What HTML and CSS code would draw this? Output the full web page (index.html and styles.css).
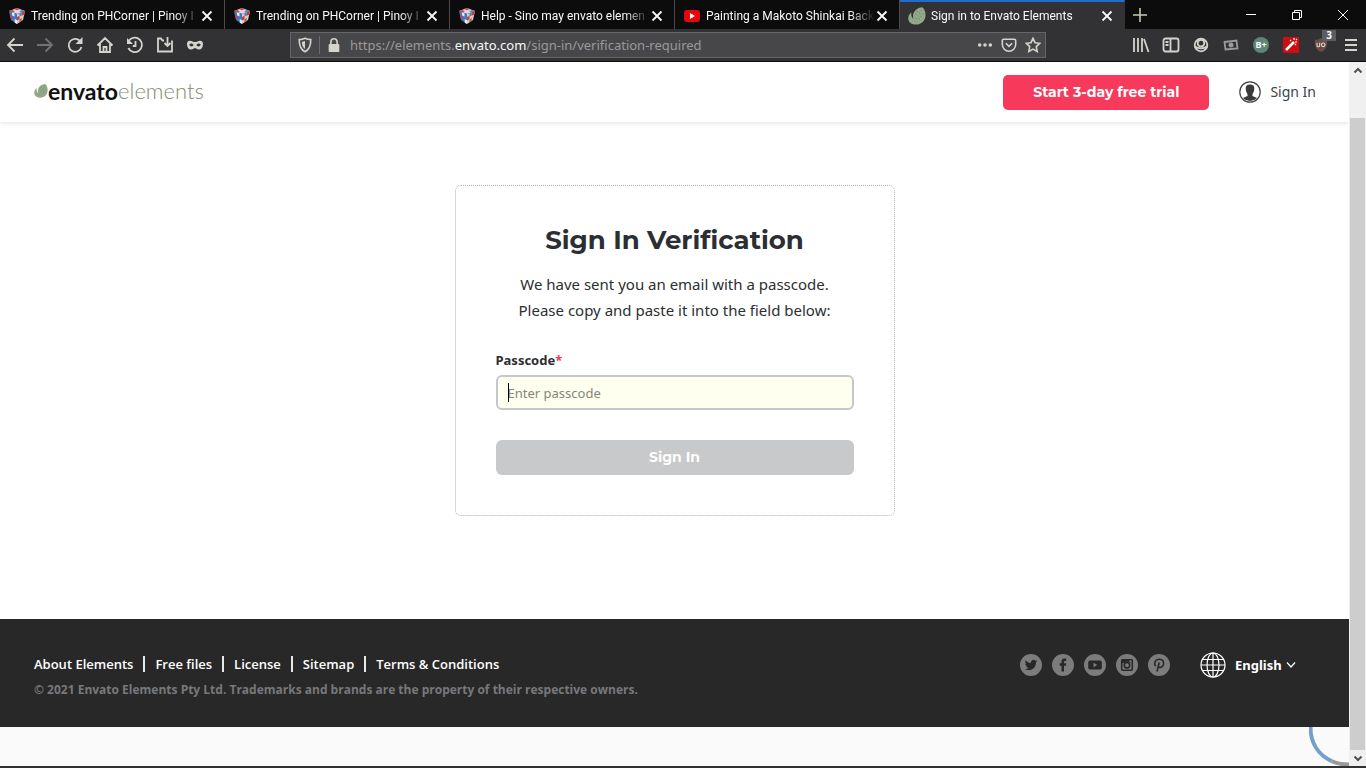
FILE: index.html
```html
<!DOCTYPE html>
<html lang="en">
<head>
<meta charset="utf-8">
<meta name="viewport" content="width=device-width, initial-scale=1">
<title>Sign in to Envato Elements</title>
<link rel="stylesheet" href="styles.css">
</head>
<body>
<svg class="sprite" aria-hidden="true">
  <symbol id="cube" viewBox="0 0 18 18">
    <path d="M9 1 17 4 9 7 1 4z" fill="#dcd8e4"/><path d="M1 4 9 7v10L3 13z" fill="#3f7ac0"/><path d="M17 4 9 7v10l6-4z" fill="#d9c9c6"/>
    <path d="M6 2l3-1 3 1-3 1.200zM1 4l3-1 3 1.200L4.500 5.300z" fill="#d33b3d"/><path d="M11 4.200 14 3l3 1-3 1.200z" fill="#4a83c4"/><path d="M3.800 5.200 6.500 6.200v3.300L4.200 8.500zM6.700 12 9 13.200V17l-2.200-1.300z" fill="#eceaf2"/><path d="M1.800 8l2.400 1 .3 3L2.500 11z" fill="#d33b3d"/><path d="M13.800 5.200 17 4l-.6 3.500-2.800 1.200zM9 10l2.500-1.200v3.400L9 13.500z" fill="#c93a3a"/><path d="M11.500 12.200 13.700 11v3L11.300 15.500z" fill="#b65a4c"/><path d="M11.500 6l2.200-.8v3.400l-2.200 1z" fill="#4a83c4"/>
  </symbol>
  <symbol id="leaf" viewBox="1 1 22.500 22.500">
    <path d="M19 1.200C12.500 1.500 7 6.500 7.200 12.500c0 1.600.3 2.800.8 3.800C5.500 14 4.600 11 5.200 7.500 2.500 9.500 1 13 1.400 16.200 2 20.500 6.500 23.300 11.500 23c6.500-.3 10.800-4.800 11.400-10.800C23.300 8.200 22 3.500 19 1.200z" fill="#93a888"/><path d="M18 5 9 19M20 9l-7 10M13 6l-3 6" stroke="#6d8068" stroke-width="1.300" stroke-dasharray="1.300 2.600" fill="none"/>
  </symbol>
  <symbol id="x" viewBox="0 0 12 12"><path d="M1.500 1.500l9 9m0-9l-9 9" stroke="currentColor" stroke-width="1.800" fill="none"/></symbol>
</svg>

<header class="chrome">
  <div class="tabstrip">
    <div class="tab"><svg class="favicon"><use href="#cube"/></svg><button class="tab-title" type="button">Trending on PHCorner | Pinoy I</button><button class="tab-close" type="button" aria-label="Close tab"><svg><use href="#x"/></svg></button></div>
    <div class="tab"><svg class="favicon"><use href="#cube"/></svg><button class="tab-title" type="button">Trending on PHCorner | Pinoy I</button><button class="tab-close" type="button" aria-label="Close tab"><svg><use href="#x"/></svg></button></div>
    <div class="tab"><svg class="favicon"><use href="#cube"/></svg><button class="tab-title" type="button">Help - Sino may envato elemen</button><button class="tab-close" type="button" aria-label="Close tab"><svg><use href="#x"/></svg></button></div>
    <div class="tab"><svg class="favicon" viewBox="0 0 18 18"><rect x="1" y="3" width="16" height="12" rx="3" fill="#e4060a"/><path d="M7 6v6l5-3z" fill="#fff"/></svg><button class="tab-title" type="button">Painting a Makoto Shinkai Back</button><button class="tab-close" type="button" aria-label="Close tab"><svg><use href="#x"/></svg></button></div>
    <div class="tab tab-active"><svg class="favicon"><use href="#leaf"/></svg><button class="tab-title" type="button">Sign in to Envato Elements</button><button class="tab-close" type="button" aria-label="Close tab"><svg><use href="#x"/></svg></button></div>
    <button class="new-tab" type="button" aria-label="New tab"><svg viewBox="0 0 14 14"><path d="M7 0v14M0 7h14" stroke="#c5c8b8" stroke-width="1.600"/></svg></button>
    <div class="window-controls">
      <button type="button" aria-label="Minimize"><svg viewBox="0 0 12 12"><path d="M1 5.500h10" stroke="#fff"/></svg></button>
      <button type="button" aria-label="Restore"><svg viewBox="0 0 12 12" fill="none" stroke="#fff"><path d="M1.500 3.500h7v7h-7zM3.500 3.500v-2h7v7h-2"/></svg></button>
      <button type="button" aria-label="Close"><svg viewBox="0 0 12 12"><path d="M1 1l10 10M11 1L1 11" stroke="#fff"/></svg></button>
    </div>
  </div>
  <div class="toolbar">
    <div class="tools">
      <button type="button" aria-label="Back"><svg viewBox="0 0 18 18"><path d="M17 9H2M8.500 2.500 2 9l6.500 6.500"/></svg></button>
      <button class="dim" type="button" aria-label="Forward"><svg viewBox="0 0 18 18"><path d="M1 9h15M9.500 2.500 16 9l-6.500 6.500"/></svg></button>
      <button type="button" aria-label="Reload"><svg viewBox="0 0 18 18"><path d="M14.500 5.500A6.500 6.500 0 1 0 15.500 11"/><path class="solid" d="M16.500 1v7h-7z"/></svg></button>
      <button type="button" aria-label="Home"><svg viewBox="0 0 18 18"><path d="M1.500 9.500 9 2l7.500 7.500M4 8v8h10V8M7.500 16v-5h3v5"/></svg></button>
      <button type="button" aria-label="History"><svg viewBox="0 0 18 18"><path d="M3 4.500A7.200 7.200 0 1 1 2.300 12M9.500 5v5H6.800"/><path class="solid" d="M1 2v6h6z"/></svg></button>
      <button type="button" aria-label="Save"><svg viewBox="0 0 18 18"><path d="M8 4.500H6.500L5 2.500H2v13h14v-11M11.500 1v8.500M8.500 7l3 3 3-3"/></svg></button>
      <button type="button" aria-label="Private browsing"><svg viewBox="0 0 18 18"><path class="solid" fill-rule="evenodd" d="M1 8c0-3 2-3.500 4-3 1.600.4 2.400 1 4 1s2.400-.6 4-1c2-.5 4 0 4 3 0 3.500-1.500 5.500-4 5.500-2.200 0-3-1.500-4-1.500s-1.800 1.500-4 1.500C2.500 13.500 1 11.500 1 8zm2.300.5c.6 2.500 3.400 2.500 4.400.6-1-2-3.400-2.200-4.400-.6zm7 .6c1 1.900 3.800 1.900 4.400-.6-1-1.600-3.400-1.400-4.400.6z"/></svg></button>
    </div>
    <div class="urlbar">
      <svg viewBox="0 0 18 18"><path d="M9 1.500c2 1 4 1.500 6.500 1.500 0 6-1.500 11-6.500 13.500C4 14 2.500 9 2.500 3 5 3 7 2.500 9 1.500z"/><path class="solid" d="M9 4.500v9C6.500 11.500 5.500 8.500 5.500 5.500z"/></svg>
      <span class="divider"></span>
      <svg viewBox="0 0 18 18"><path d="M5.500 9V5.500a3.500 3.500 0 0 1 7 0V9"/><rect class="solid" x="3" y="8" width="12" height="9" rx="1"/></svg>
      <div class="url" role="textbox" aria-label="Address">https://elements.<b>envato.com</b>/sign-in/verification-required</div>
      <button type="button" aria-label="Page actions"><svg viewBox="0 0 18 18"><g class="solid"><circle cx="3" cy="9" r="2"/><circle cx="9" cy="9" r="2"/><circle cx="15" cy="9" r="2"/></g></svg></button>
      <button type="button" aria-label="Pocket"><svg viewBox="0 0 18 18"><path d="M3 2.500h12a1.500 1.500 0 0 1 1.500 1.500v4.500a7.500 7.500 0 0 1-15 0V4A1.500 1.500 0 0 1 3 2.500zM5.500 7 9 10.500 12.500 7"/></svg></button>
      <button type="button" aria-label="Bookmark"><svg viewBox="0 0 18 18"><path d="M9 1.500l2.300 4.900 5.200.7-3.800 3.700 1 5.400L9 13.600l-4.700 2.600 1-5.400L1.500 7.100l5.200-.7z"/></svg></button>
    </div>
    <div class="tools">
      <button type="button" aria-label="Library"><svg viewBox="0 0 18 18"><path d="M2 2v14M6 2v14M10 2v14M12 3l4.500 13"/></svg></button>
      <button type="button" aria-label="Sidebars"><svg viewBox="0 0 18 18"><rect x="1.500" y="2.500" width="15" height="13" rx="2"/><path d="M8.500 2.500v13M3.500 6h3M3.500 9h3"/></svg></button>
      <button type="button" aria-label="Account"><svg viewBox="0 0 18 18"><circle cx="9" cy="9" r="6.300"/><circle cx="9" cy="7.200" r="3.300"/><path d="M3 10.500c3 2.500 9 2.500 12 0"/></svg></button>
      <button class="dim-mid" type="button" aria-label="Capture"><svg viewBox="0 0 18 18"><path d="M2.500 6l12-1.500 1 8-12 1z"/><circle class="solid" cx="9" cy="9" r="2.500"/></svg></button>
      <button type="button" aria-label="B plus"><span class="ext-b">B+</span></button>
      <button type="button" aria-label="Magic wand"><svg viewBox="0 0 18 18"><path d="M1 1h16v16H1z" fill="#cf0d10" stroke="none"/><path d="M4 14l8-8" stroke="#fff" stroke-width="2.500"/><path d="M12 2v2M15 6h-2M8 4l1 1M14 9l-1-1M15 3l-1 1" stroke="#fff" stroke-width="1.200"/></svg></button>
      <button class="ublock" type="button" aria-label="Blocker, 3 blocked"><svg viewBox="0 0 18 18"><path d="M9 1c2 1.500 4 2 7 2 .3 7-1 11-7 14C3 14 1.700 10 2 3c3 0 5-.5 7-2z" fill="#6d4a43" stroke="none"/><path d="M4.500 6.500v3q0 1.500 1.500 1.500t1.500-1.500v-3" stroke-width="1.300"/><circle cx="11.500" cy="8.800" r="2" stroke-width="1.300"/></svg><span class="badge">3</span></button>
      <button type="button" aria-label="Menu"><svg viewBox="0 0 18 18"><path d="M3 4h12M3 9h12M3 14h12"/></svg></button>
    </div>
  </div>
</header>

<div class="viewport">
  <div class="page">
    <header class="site-header">
      <a class="logo" href="#"><svg class="logo-leaf"><use href="#leaf"/></svg><span class="logo-envato">envato</span><span class="logo-elements">elements</span></a>
      <a class="trial" href="#">Start 3-day free trial</a>
      <a class="account" href="#"><svg viewBox="0 0 22 22"><circle cx="11" cy="11" r="10.200" fill="#fff" stroke="#3e4043" stroke-width="1.200"/><path d="M11 3.500c3.500 0 4.600 2.200 4.200 5-.2 2.500-1 3.500-1.700 4.500v2l4.600 2a10.200 10.200 0 0 1-14.200 0l4.600-2v-2C7.800 12 7 11 6.800 8.500 6.400 5.700 7.500 3.500 11 3.500z" fill="#3a3a3b"/></svg>Sign In</a>
    </header>

    <main class="content">
      <form class="card">
        <h1>Sign In Verification</h1>
        <p>We have sent you an email with a passcode.<br>Please copy and paste it into the field below:</p>
        <label for="passcode">Passcode<span class="required">*</span></label>
        <div class="field"><input id="passcode" type="text" placeholder="Enter passcode"><span class="caret"></span></div>
        <button class="submit" type="button">Sign In</button>
      </form>
    </main>

    <footer class="site-footer">
      <div class="legal">
        <nav class="links"><a href="#">About Elements</a><a href="#">Free files</a><a href="#">License</a><a href="#">Sitemap</a><a href="#">Terms &amp; Conditions</a></nav>
        <div class="copyright">© 2021 Envato Elements Pty Ltd. Trademarks and brands are the property of their respective owners.</div>
      </div>
      <nav class="social">
        <a href="#" aria-label="Twitter"><svg viewBox="-9 -9 42 42"><path d="M23.950 4.570a10 10 0 0 1-2.820.770 4.960 4.960 0 0 0 2.160-2.720 9.900 9.900 0 0 1-3.120 1.190 4.920 4.920 0 0 0-8.380 4.480C7.690 8.090 4.070 6.130 1.640 3.160a4.920 4.920 0 0 0 1.520 6.570 4.900 4.900 0 0 1-2.230-.610v.060c0 2.380 1.700 4.370 3.950 4.830a5 5 0 0 1-2.210.080 4.930 4.930 0 0 0 4.600 3.420A9.870 9.870 0 0 1 0 19.540a13.990 13.990 0 0 0 7.550 2.210c9.050 0 14-7.500 14-13.980 0-.210 0-.420-.020-.630a9.940 9.940 0 0 0 2.420-2.570z"/></svg></a>
        <a href="#" aria-label="Facebook"><svg viewBox="0 0 22 22"><path d="M9.500 17.500V11.800H7.700V9.300h1.800V7.700c0-2 1-3.200 3-3.200h1.700v2.400h-1.100c-.8 0-1.100.3-1.100 1.100v1.300h2.200l-.3 2.500H12v5.700z"/></svg></a>
        <a href="#" aria-label="YouTube"><svg viewBox="0 0 22 22"><path fill-rule="evenodd" d="M6 6.500h10q1.800 0 1.800 1.800v5.400q0 1.800-1.800 1.800H6q-1.800 0-1.800-1.800V8.300Q4.200 6.500 6 6.500zM9.500 8.800v4.400l3.800-2.200z"/></svg></a>
        <a href="#" aria-label="Instagram"><svg viewBox="0 0 22 22"><rect class="line" x="5.700" y="5.700" width="10.600" height="10.600" rx="1"/><path d="M5.500 5.500h11V9h-3a3.500 3.500 0 0 0-5 0h-3z"/><path d="M13.400 6.500v2h2.200v-2z" fill="#7c7c7c"/><circle class="line" cx="11" cy="11.200" r="2.700"/></svg></a>
        <a href="#" aria-label="Pinterest"><svg viewBox="0 0 22 22"><path class="line" d="M7.600 12.200C5.400 8.500 7.500 5.200 11.200 5.200c3.400 0 5.200 2.500 4.200 5.500-.8 2.500-3.700 3.500-5 1.800M11.200 8.500 9 17.500"/></svg></a>
      </nav>
      <div class="language">
        <svg class="globe" viewBox="0 0 26 26"><circle cx="13" cy="13" r="12"/><ellipse cx="13" cy="13" rx="6" ry="12"/><path d="M13 1v24M1 13h24M3 7.500h20M3 18.500h20"/></svg>
        <select aria-label="Language"><option>English</option></select>
        <svg class="chevron" viewBox="0 0 10 10"><path d="M1 2.500l4 4.500 4-4.500"/></svg>
      </div>
    </footer>

    <div class="page-end"><svg viewBox="0 0 40 39"><path d="M1.500 0c0 16 8 28 21 34" stroke="#729fd0"/><path d="M22.500 34c6 3 11 3.500 17.500 3.500" stroke="#9a9a96"/></svg></div>
  </div>
  <div class="scrollbar" aria-hidden="true">
    <svg viewBox="0 0 16 16"><path d="M4.500 10.500 8 7l3.500 3.500"/></svg>
    <div class="track"><div class="thumb"></div></div>
    <svg viewBox="0 0 16 16"><path d="M4.500 6.500 8 10l3.500-3.500"/></svg>
  </div>
</div>
</body>
</html>
```
FILE: styles.css
```css
* { box-sizing: border-box; }
body {
  margin: 0;
  min-height: 100vh;
  display: flex;
  flex-direction: column;
  background: #fff;
  border-bottom: 2px solid #303234;
  font-family: "Segoe UI", "Noto Sans", sans-serif;
  color: #2b2f33;
}
button, input, select { font: inherit; color: inherit; }
button { border: 0; padding: 0; background: none; }
a { color: inherit; text-decoration: none; }
svg { display: block; flex: none; }
.sprite { position: absolute; width: 0; height: 0; }

/* Browser chrome */
.chrome { color: #f9f9fa; }
.tabstrip { display: flex; height: 29px; background: #0c0c0d; }
.tab {
  flex: 0 1 225px;
  min-width: 0;
  display: flex;
  align-items: center;
  padding: 2px 10px 0 8px;
  border-right: 1px solid #4a4a4f;
}
.tab-active { border-right-color: #323234; border-top: 2px solid #1c6fd0; padding-top: 0; background: #323234; }
.favicon { width: 18px; height: 18px; margin-right: 5px; }
.tab-title {
  flex: 1;
  min-width: 0;
  overflow: hidden;
  white-space: nowrap;
  text-align: left;
  font-family: "Segoe UI", Roboto, sans-serif;
  font-size: 12px;
  line-height: 20px;
  -webkit-mask-image: linear-gradient(to right, #000 85%, transparent);
  mask-image: linear-gradient(to right, #000 85%, transparent);
}
.tab-close { width: 14px; display: grid; place-items: center; }
.tab-close svg { width: 12px; height: 12px; }
.new-tab { width: 30px; display: grid; place-items: center; }
.new-tab svg { width: 14px; height: 14px; }
.window-controls { display: flex; margin-left: auto; }
.window-controls button { width: 46px; display: grid; place-items: center; }
.window-controls svg { width: 12px; height: 12px; }

.toolbar {
  display: flex;
  align-items: center;
  gap: 80px;
  height: 33px;
  background: #323234;
  border-bottom: 1px solid #0c0c0d;
}
.toolbar svg { width: 18px; height: 18px; fill: none; stroke: #d3d4cd; stroke-width: 1.800; }
.toolbar .solid { fill: #d3d4cd; stroke: none; }
.tools { display: flex; }
.tools button { width: 30px; height: 30px; display: grid; place-items: center; position: relative; }
.dim { opacity: .4; }
.dim-mid { opacity: .65; }
.ext-b {
  width: 16px;
  border-radius: 50%;
  background: #5c8678;
  font-size: 9px;
  line-height: 16px;
  font-weight: 700;
  text-align: center;
}
.toolbar .ublock svg { width: 16px; height: 16px; }
.badge {
  position: absolute;
  top: 0;
  right: 0;
  width: 14px;
  background: #5c5c61;
  font-size: 10px;
  line-height: 11px;
  font-weight: 700;
  text-align: center;
}
.urlbar {
  flex: 1;
  min-width: 0;
  display: flex;
  align-items: center;
  height: 26px;
  padding: 0 0 0 6px;
  background: #474749;
  border: 1px solid #66666a;
}
.urlbar button { width: 24px; display: grid; place-items: center; }
.urlbar svg { width: 16px; height: 16px; }
.divider { width: 1px; height: 18px; margin: 0 6px; background: #6b6b6e; }
.url { flex: 1; min-width: 0; overflow: hidden; white-space: nowrap; padding-left: 8px; font-size: 13px; line-height: 22px; color: #99999c; }
.url b { font-weight: 400; color: #f9f9fa; }

/* Page and its scrollbar */
.viewport { flex: 1; display: flex; }
.page { flex: 1; min-width: 0; display: flex; flex-direction: column; }
.scrollbar { width: 17px; display: flex; flex-direction: column; padding-left: 1px; background: #f0f0f0; }
.scrollbar svg { width: 16px; height: 16px; fill: none; stroke: #505050; stroke-width: 2; }
.track { flex: 1; display: flex; flex-direction: column; justify-content: flex-end; }
.thumb { height: 94%; margin-right: 1px; background: #cdcdcd; }

.site-header {
  display: flex;
  align-items: center;
  height: 60px;
  padding: 0 33px 0 34px;
  box-shadow: 0 1px 5px rgba(0, 0, 0, .12);
}
.logo { display: flex; align-items: center; margin-right: auto; font-family: Lato, sans-serif; font-size: 22px; line-height: 26px; padding-bottom: 2px; }
.logo-leaf { width: 14px; height: 16px; }
.logo-envato { font-size: 23px; font-weight: 700; color: #111; }
.logo-elements { font-weight: 300; color: #7f8c70; }
.trial {
  padding: 0 30px;
  border-radius: 5px;
  background: #f7395b;
  color: #fff;
  font: 700 14px/35px Montserrat, Inter, sans-serif;
}
.account { display: flex; align-items: center; gap: 9px; margin-left: 30px; font-size: 14px; line-height: 24px; color: #3a444c; }
.account svg { width: 22px; height: 22px; }

.content { flex: 1; display: flex; justify-content: center; align-items: flex-start; padding: 63px 20px 103px; }
.card {
  width: 100%;
  max-width: 440px;
  padding: 36px 40px 40px;
  border: 1px dotted #b0b0b0;
  border-radius: 6px;
}
h1 { margin: 0 0 13px; font: 700 26px/36px Montserrat, Inter, sans-serif; text-align: center; }
.card p { margin: 0 0 27px; font-size: 15px; line-height: 26px; text-align: center; white-space: nowrap; }
label { display: block; margin-bottom: 5px; font-size: 13px; line-height: 20px; font-weight: 700; }
.required { color: #f0395b; }
.field { position: relative; margin-bottom: 30px; }
.field input {
  display: block;
  width: 100%;
  height: 35px;
  padding: 0 10px;
  border: 2px solid #c5c7c8;
  border-radius: 6px;
  outline: 0;
  background: #ffffef;
  font-size: 13px;
}
.field input::placeholder { color: #85867c; opacity: 1; }
.caret { position: absolute; left: 12px; top: 8px; width: 1px; height: 19px; background: #000; }
.submit {
  display: block;
  width: 100%;
  border-radius: 6px;
  background: #c7c9ca;
  color: #fff;
  font: 700 14px/35px Montserrat, Inter, sans-serif;
}

.site-footer { display: flex; align-items: flex-start; padding: 32px 53px 24px 34px; background: #282828; color: #fff; font-size: 13px; font-weight: 700; }
.legal { margin-right: auto; font-family: "Segoe UI", "Open Sans", sans-serif; font-weight: 600; line-height: 26px; }
.links { display: flex; }
.links a + a { display: flex; align-items: center; }
.links a + a::before { content: ""; width: 2px; height: 16px; margin: 0 10px; background: #e8e8e8; }
.copyright { color: #77787c; font-size: 12px; font-weight: 700; }
.social { display: flex; gap: 10px; padding-top: 3px; }
.social a { width: 22px; height: 22px; border-radius: 50%; background: #7c7c7c; }
.social svg { width: 22px; height: 22px; fill: #282828; }
.social .line { fill: none; stroke: #282828; stroke-width: 1.600; }
.language { display: flex; align-items: center; margin-left: 30px; padding-top: 1px; line-height: 26px; }
.globe { width: 26px; height: 26px; margin-right: 9px; fill: none; stroke: #fff; stroke-width: 1.200; }
.language select { appearance: none; border: 0; padding: 0; background: none; line-height: 26px; }
.language option { color: #222; }
.chevron { width: 10px; height: 10px; margin-left: 4px; fill: none; stroke: #fff; stroke-width: 1.200; }

.page-end { display: flex; justify-content: flex-end; background: #fafafa; }
.page-end svg { width: 40px; height: 39px; fill: none; stroke-width: 4; }
```
